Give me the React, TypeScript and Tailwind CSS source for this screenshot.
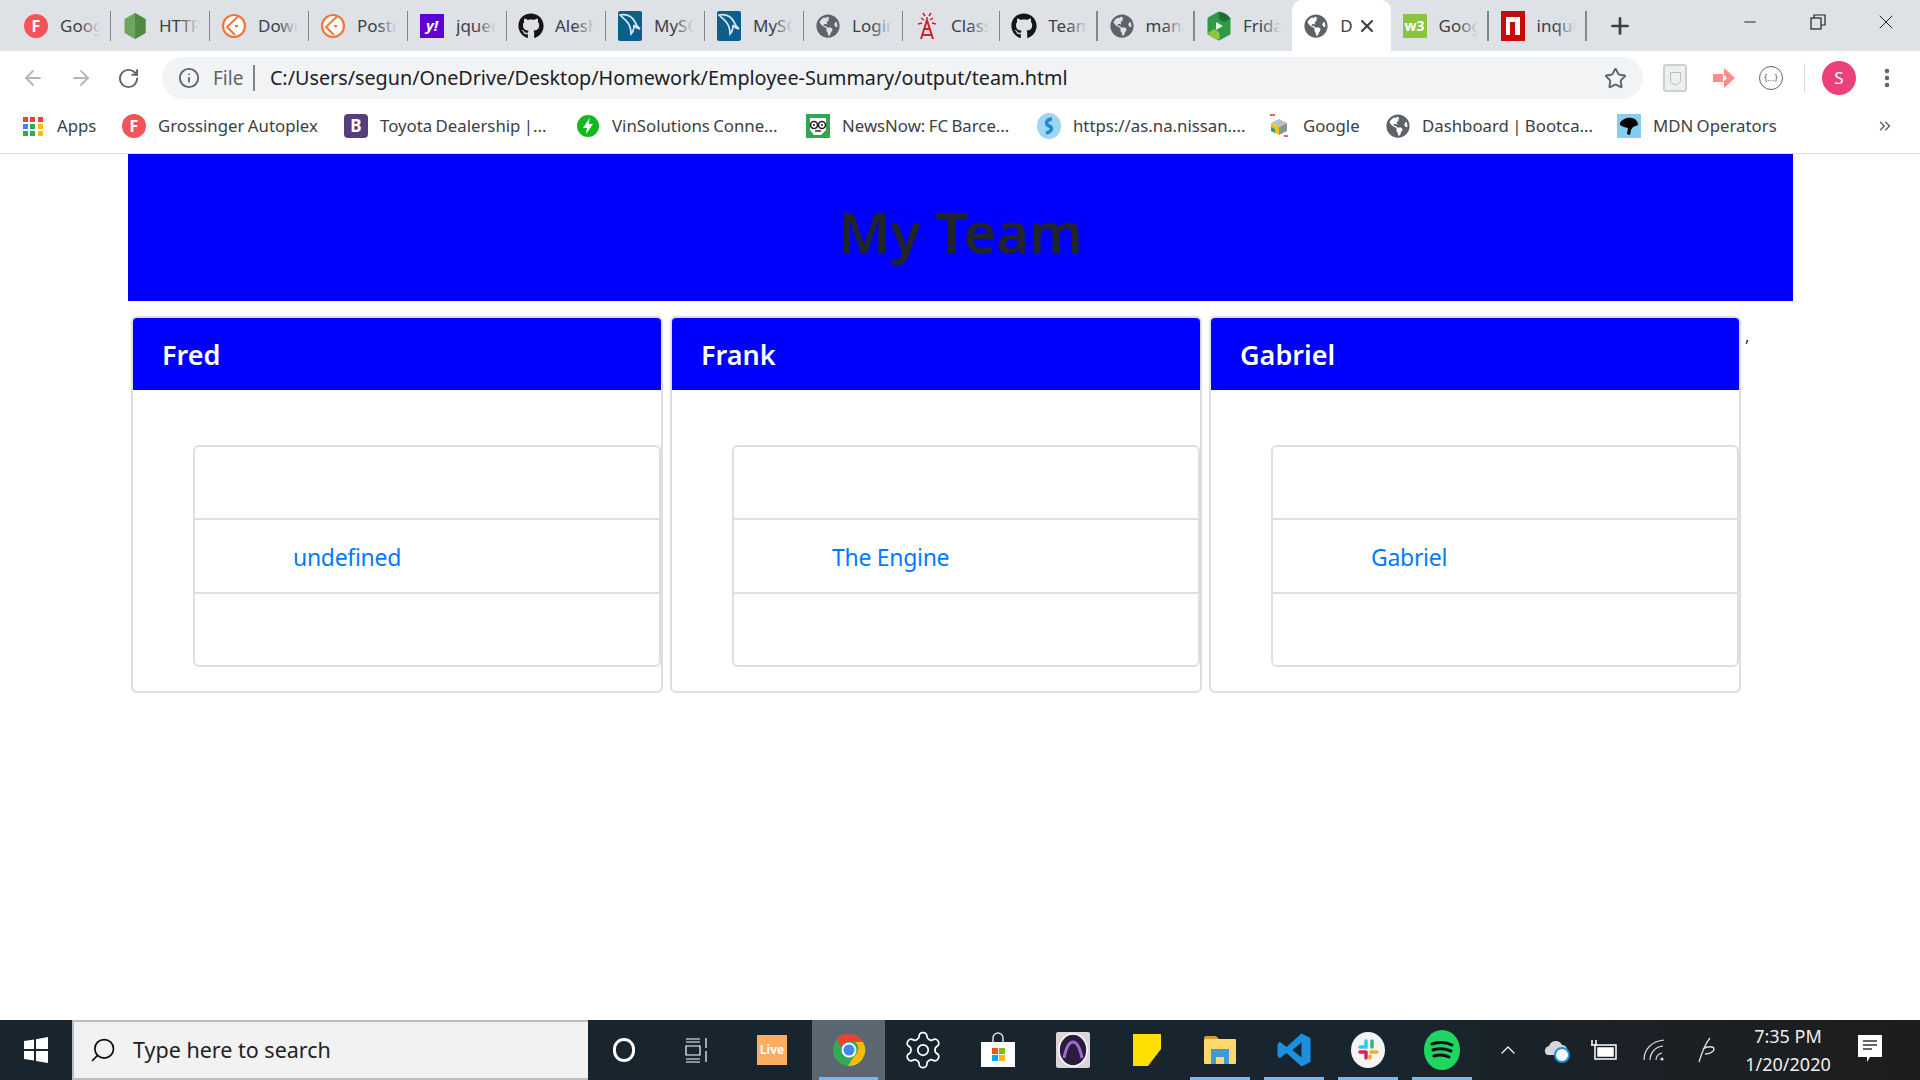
import * as React from "react";
import { FaGithub, FaGlobeAmericas } from "react-icons/fa";
import { ArrowLeft, ArrowRight, RotateCw, Info, Star, MoreVertical, Plus, X, Minus, Search, ChevronUp, ChevronsRight } from "lucide-react";

const IconF = () => (
  <div className="w-6 h-6 rounded-full bg-[#f4535a] flex items-center justify-center text-white text-[16px] font-bold">F</div>
);
const IconNode = () => (
  <svg width="24" height="28" viewBox="0 0 24 28">
    <path d="M12 1l10.5 6v14L12 27 1.500 21V7z" fill="#6da55f" />
    <path d="M12 1l10.500 6v14L12 27z" fill="#4e8b45" />
  </svg>
);
const IconPostman = () => (
  <svg width="26" height="26" viewBox="0 0 26 26">
    <circle cx="13" cy="13" r="11" fill="#fff" stroke="#f4743b" strokeWidth="2.200" />
    <path d="M17 3.500L6 14l8 8M14 13h3" fill="none" stroke="#f4743b" strokeWidth="2" />
  </svg>
);
const IconYahoo = () => (
  <div className="w-6 h-6 bg-[#5f01d1] flex items-center justify-center text-white text-[15px] font-bold italic">y!</div>
);
const IconMysql = () => (
  <svg width="24" height="30" viewBox="0 0 24 30">
    <rect width="24" height="30" rx="2" fill="#0d5e8a" />
    <path d="M2 4c6-1 12 1 15 7 1 3 3 5 5 7-3-1-5-2-6-4 0 4-1 7-3 9 0-4-1-8-3-11-2-3-5-5-8-8z" fill="none" stroke="#d8e8f0" strokeWidth="1.700" />
  </svg>
);
const IconGlobe = () => <FaGlobeAmericas size={24} className="text-[#5f6368]" />;
const IconGitHub = () => <FaGithub size={26} className="text-[#161514]" />;
const IconTower = () => (
  <svg width="24" height="28" viewBox="0 0 24 28" fill="none" stroke="#c8232c" strokeWidth="2">
    <path d="M12 8L6 27M12 8l6 19M9 17h6M7.500 23h9" />
    <path d="M12 5v3M6 6l3 2M18 6l-3 2M3 12l4-1M21 12l-4-1M8 1l2 3M16 1l-2 3" strokeWidth="1.500" />
  </svg>
);
const IconFriday = () => (
  <svg width="28" height="30" viewBox="0 0 28 30">
    <path d="M14 2l10 5.500v15L14 28 4 22.500v-15z" fill="#2e9a48" stroke="#2e9a48" strokeWidth="3" strokeLinejoin="round" />
    <path d="M14 1c5 0 10 3 11 7l-6 3-5-3z" fill="#1f6f35" />
    <path d="M3 22l6-4 5 3 1 7c-5 1-10-2-12-6z" fill="#8cc63f" />
    <path d="M11 11l7 4-7 4z" fill="#e4f2dc" />
  </svg>
);
const IconW3 = () => (
  <div className="w-6 h-6 bg-[#8ac43f] flex items-center justify-center text-white text-[14px] font-bold">w3</div>
);
const IconNpm = () => (
  <div className="w-6 h-[30px] bg-[#c90b0b] flex items-center justify-center">
    <div className="w-[14px] h-[18px] bg-white flex justify-center items-end">
      <div className="w-[5px] h-[13px] bg-[#c90b0b]" />
    </div>
  </div>
);
const IconApps = () => (
  <div className="grid grid-cols-3 gap-[2px] w-5">
    {["#ea4335", "#ea4335", "#ea4335", "#4285f4", "#34a853", "#fbbc05", "#34a853", "#34a853", "#fbbc05"].map((c, i) => (
      <div key={i} className="w-[5px] h-[5px]" style={{ backgroundColor: c }} />
    ))}
  </div>
);
const IconB = () => (
  <div className="w-6 h-6 rounded-[4px] bg-[#563d7c] flex items-center justify-center text-white text-[17px] font-bold">B</div>
);
const IconBolt = () => (
  <svg width="24" height="24" viewBox="0 0 24 24">
    <circle cx="12" cy="12" r="11" fill="#12b81f" />
    <path d="M13.500 4L7 14h4l-1 6 7-10h-4z" fill="#fff" />
  </svg>
);
const IconNews = () => (
  <svg width="24" height="24" viewBox="0 0 24 24">
    <rect width="24" height="24" fill="#2fa84f" />
    <path d="M4 4h16v12l-5 5H8l-4-5z" fill="#fff" />
    <circle cx="8" cy="11" r="3.500" fill="#fff" stroke="#222" strokeWidth="1.600" />
    <circle cx="16" cy="11" r="3.500" fill="#fff" stroke="#222" strokeWidth="1.600" />
    <circle cx="8" cy="11" r="1" fill="#222" />
    <circle cx="16" cy="11" r="1" fill="#222" />
    <path d="M9 17h6" stroke="#222" strokeWidth="1.400" />
  </svg>
);
const IconNissan = () => (
  <svg width="24" height="28" viewBox="0 0 24 28">
    <ellipse cx="12" cy="14" rx="12" ry="13" fill="#9ed5f0" />
    <path d="M15 7c-6 0-7 6-3 7s3 6-3 7" fill="none" stroke="#1d8ad0" strokeWidth="3.500" />
  </svg>
);
const IconCube = () => (
  <svg width="24" height="26" viewBox="0 0 24 26">
    <path d="M3 2h5M17 23h4" stroke="#d33" strokeWidth="1.500" />
    <path d="M12 6l8 4-8 4-8-4z" fill="#b9c2c2" />
    <path d="M4 10l8 4v8l-8-4z" fill="#f0c419" />
    <path d="M20 10l-8 4v8l8-4z" fill="#8a9596" />
    <path d="M4 14l4 2v4l-4-2z" fill="#2d9a8f" />
  </svg>
);
const IconMdn = () => (
  <div className="w-6 h-6 bg-[#83cdf0] flex items-center justify-center">
    <svg width="20" height="20" viewBox="0 0 20 20">
      <path d="M1 7c2-4 7-6 12-5 4 1 6 4 6 7l-5 2-2 3-1 5-3-1 1-6-4-1-4-2z" fill="#000" />
    </svg>
  </div>
);

const tabs = [
  { title: "Google", icon: <IconF />, width: "w-[99px]" },
  { title: "HTTP", icon: <IconNode />, width: "w-[99px]" },
  { title: "Download", icon: <IconPostman />, width: "w-[99px]" },
  { title: "Postman", icon: <IconPostman />, width: "w-[99px]" },
  { title: "jquery", icon: <IconYahoo />, width: "w-[99px]" },
  { title: "Alesha", icon: <IconGitHub />, width: "w-[99px]" },
  { title: "MySQL", icon: <IconMysql />, width: "w-[99px]" },
  { title: "MySQL", icon: <IconMysql />, width: "w-[99px]" },
  { title: "Login", icon: <IconGlobe />, width: "w-[99px]" },
  { title: "Classes", icon: <IconTower />, width: "w-[97.300px]" },
  { title: "Team", icon: <IconGitHub />, width: "w-[97.300px]" },
  { title: "manage", icon: <IconGlobe />, width: "w-[97.300px]" },
  { title: "Friday", icon: <IconFriday />, width: "w-[97.300px]" },
];

const bookmarks = [
  { label: "Apps", icon: <IconApps />, width: "w-[101px]" },
  { label: "Grossinger Autoplex", icon: <IconF />, width: "w-[222px]" },
  { label: "Toyota Dealership |...", icon: <IconB />, width: "w-[232px]" },
  { label: "VinSolutions Conne...", icon: <IconBolt />, width: "w-[230px]" },
  { label: "NewsNow: FC Barce...", icon: <IconNews />, width: "w-[231px]" },
  { label: "https://as.na.nissan....", icon: <IconNissan />, width: "w-[230px]" },
  { label: "Google", icon: <IconCube />, width: "w-[119px]" },
  { label: "Dashboard | Bootca...", icon: <IconGlobe />, width: "w-[231px]" },
  { label: "MDN Operators", icon: <IconMdn />, width: "w-[230px]" },
];

function Tab({ title, icon, width, last }: { title: string; icon: React.ReactNode; width: string; last?: boolean }) {
  return (
    <div className={`relative flex items-center h-full shrink-0 pr-[11px] ${width}`}>
      <div className="w-12 shrink-0 flex justify-center">{icon}</div>
      <div className="relative flex-1 overflow-hidden whitespace-nowrap text-[17px] text-[#3c4043]">
        {title}
        <div className="absolute inset-y-0 right-0 w-5 bg-gradient-to-r from-transparent to-[#dee1e6]" />
      </div>
      {!last && <div className="absolute right-0 top-[11px] h-[30px] w-[1.500px] bg-[#83868b]" />}
    </div>
  );
}

function TeamCard({ name, detail }: { name: string; detail: string }) {
  return (
    <div className="w-[532px] h-[377px] shrink-0 rounded-[6px] border-2 border-[#dfdfdf] overflow-hidden">
      <div className="h-[72px] pt-[2px] bg-[#0000ff] flex items-center pl-[29px] text-white text-[27px] font-semibold">{name}</div>
      <div className="pt-[55px] pl-[60px]">
        <div className="rounded-[6px] border-2 border-[#dfdfdf]">
          <div className="h-[71px]" />
          <div className="h-[76px] pt-[2px] border-y-2 border-[#dfdfdf] flex items-center pl-[98px] text-[23px] tracking-[-0.3px] text-[#007bff]">{detail}</div>
          <div className="h-[71px]" />
        </div>
      </div>
    </div>
  );
}

function TaskIcon({ children, width, active, underline }: { children: React.ReactNode; width: string; active?: boolean; underline?: boolean }) {
  return (
    <div className={`relative h-full flex items-center justify-center shrink-0 ${width} ${active ? "bg-[#5b6770]" : ""}`}>
      {children}
      {underline && <div className="absolute bottom-0 left-[7px] right-[7px] h-[3px] bg-[#76b9ed]" />}
    </div>
  );
}

export default function App() {
  return (
    <div className="w-[1920px] h-[1080px] flex flex-col overflow-hidden bg-white font-['Noto_Sans',sans-serif] text-[#212529]">
      {/* tab strip */}
      <div className="h-[51px] shrink-0 bg-[#dee1e6] flex items-center pl-[12px]">
        {tabs.map((t, i) => (
          <Tab key={i} title={t.title} icon={t.icon} width={t.width} last={i === tabs.length - 1} />
        ))}
        <div className="relative w-[98.400px] h-[51px] shrink-0 bg-white rounded-t-[10px] flex items-center">
          <div className="w-12 shrink-0 flex justify-center"><IconGlobe /></div>
          <div className="w-3 overflow-hidden text-[17px] text-[#3c4043]">D</div>
          <X size={20} strokeWidth={2.500} className="ml-[5px] text-[#3c4043]" />
        </div>
        <Tab title="Google" icon={<IconW3 />} width="w-[98px]" />
        <Tab title="inquirer" icon={<IconNpm />} width="w-[98px]" />
        <Plus size={26} strokeWidth={2.500} className="ml-[20px] text-[#3c4043]" />
        <div className="ml-auto flex items-center self-start h-[44px] text-[#222]">
          <div className="w-[68px] flex justify-center"><Minus size={18} strokeWidth={1.300} /></div>
          <div className="w-[68px] flex justify-center">
            <svg width="16" height="16" viewBox="0 0 16 16" fill="none" stroke="#222" strokeWidth="1.200">
              <rect x="1" y="4" width="10" height="11" />
              <path d="M4 4V1h11v10h-4" />
            </svg>
          </div>
          <div className="w-[68px] flex justify-center"><X size={24} strokeWidth={1} /></div>
        </div>
      </div>

      {/* address bar */}
      <div className="h-[52px] shrink-0 flex items-center pt-[2px]">
        <div className="w-[162px] shrink-0 flex items-center pl-[21px] gap-[24px]">
          <ArrowLeft size={24} strokeWidth={1.800} className="text-[#b4b6b8]" />
          <ArrowRight size={24} strokeWidth={1.800} className="text-[#b4b6b8]" />
          <RotateCw size={23} strokeWidth={2} className="text-[#5f6368]" />
        </div>
        <div className="w-[1481px] h-[42px] shrink-0 rounded-full bg-[#f1f3f4] flex items-center pl-4 pr-[16px]">
          <Info size={22} strokeWidth={2} className="text-[#5f6368]" />
          <span className="ml-[13px] text-[#5f6368] text-[19px]">File</span>
          <div className="ml-[10px] w-[1.500px] h-[26px] bg-[#80868b]" />
          <span className="ml-[15px] text-[#202124] text-[19.750px]">C:/Users/segun/OneDrive/Desktop/Homework/Employee-Summary/output/team.html</span>
          <Star size={23} strokeWidth={2} className="ml-auto text-[#5f6368]" />
        </div>
        <div className="flex-1 flex items-center pl-[20px]">
          <div className="w-6 h-7 rounded-[3px] border-2 border-[#ccd0d2] bg-[#eef0f0] flex items-center justify-center">
            <div className="w-[11px] h-[13px] rounded-b-[5px] border border-[#b9bdbf]" />
          </div>
          <svg width="26" height="26" viewBox="0 0 26 26" className="ml-[24px]">
            <path d="M13 3l11 10-11 10v-6H2V9h11z" fill="#ff8a8a" />
            <path d="M12 9l4 4-4 4z" fill="#fff" />
          </svg>
          <div className="ml-[22px] w-6 h-6 rounded-full border-[1.500px] border-[#5f6368] flex items-center justify-center text-[9px] text-[#5f6368]">{"{...}"}</div>
          <div className="ml-[21px] w-px h-[30px] bg-[#dadce0]" />
          <div className="ml-[17px] w-[34px] h-[34px] rounded-full bg-[#ec407a] flex items-center justify-center text-white text-[17px]">S</div>
          <MoreVertical size={24} strokeWidth={2.500} className="ml-[19px] text-[#5f6368]" />
        </div>
      </div>

      {/* bookmarks */}
      <div className="h-[51px] shrink-0 border-b border-[#dadce0] flex items-center pl-[21px] pb-[4px]">
        {bookmarks.map((b) => (
          <div key={b.label} className={`flex items-center shrink-0 ${b.width}`}>
            <div className="w-6 flex justify-center shrink-0">{b.icon}</div>
            <span className="ml-[12px] whitespace-nowrap text-[16.800px] [word-spacing:-1px] text-[#3c4043]">{b.label}</span>
          </div>
        ))}
        <ChevronsRight size={18} className="text-[#5f6368] ml-auto mr-[26px]" />
      </div>

      {/* page */}
      <div className="flex-1 pl-[128px]">
        <div className="w-[1665px] h-[147px] pt-[6px] bg-[#0000ff] flex items-center justify-center text-[56px] font-semibold text-[#212529]">My Team</div>
        <div className="mt-[15px] ml-[3px] flex items-start gap-[7px]">
          <TeamCard name="Fred" detail="undefined" />
          <TeamCard name="Frank" detail="The Engine" />
          <TeamCard name="Gabriel" detail="Gabriel" />
          <span className="text-[16px] leading-[40px] ml-[-3px]">,</span>
        </div>
      </div>

      {/* taskbar */}
      <div className="h-[60px] shrink-0 flex items-center bg-gradient-to-r from-[#18252f] from-70% to-[#1d1d1d] text-white">
        <div className="w-[72px] h-full flex items-center justify-center shrink-0">
          <svg width="24" height="26" viewBox="0 0 24 26" fill="#fff">
            <path d="M0 4l10-1.500V12H0zM12 2.200L24 0v12H12zM0 14h10v9.500L0 22zM12 14h12v12l-12-2z" />
          </svg>
        </div>
        <div className="w-[516px] h-full shrink-0 bg-[#f2f2f2] border-2 border-[#bdbdbd] border-r-0 flex items-center pl-[15px] text-[21.500px] text-[#222]">
          <Search size={28} strokeWidth={1.500} className="text-[#111] -scale-x-100" />
          <span className="ml-[16px]">Type here to search</span>
        </div>
        <TaskIcon width="w-[72px]"><div className="w-[22px] h-[24px] rounded-full border-[3px] border-white" /></TaskIcon>
        <TaskIcon width="w-[72px]">
          <svg width="26" height="26" viewBox="0 0 26 26" fill="none" stroke="#fff" strokeWidth="1.200">
            <path d="M3 2h14M3 5h14M3 9h14v9H3zM3 22h14M3 25h14M23 1v10M23 14v11" />
          </svg>
        </TaskIcon>
        <TaskIcon width="w-[80px]">
          <div className="w-[30px] h-[30px] bg-[#fdac62] flex items-center justify-center text-white text-[12px] font-bold">Live</div>
        </TaskIcon>
        <TaskIcon width="w-[73px]" active underline>
          <svg width="34" height="34" viewBox="0 0 34 34">
            <circle cx="17" cy="17" r="16" fill="#34a853" />
            <path d="M17 1a16 16 0 0 1 14 8H17a8 8 0 0 0-7.500 5L4 6a16 16 0 0 1 13-5z" fill="#ea4335" />
            <path d="M31 9a16 16 0 0 1-15 24l7-11a8 8 0 0 0 0-13z" fill="#fbbc05" />
            <circle cx="17" cy="17" r="7.500" fill="#fff" />
            <circle cx="17" cy="17" r="5.500" fill="#4285f4" />
          </svg>
        </TaskIcon>
        <TaskIcon width="w-[75px]">
          <svg width="42" height="42" viewBox="0 0 24 24" fill="none" stroke="#fff" strokeWidth="1">
            <path d="M12.220 2h-.44a2 2 0 0 0-2 2v.180a2 2 0 0 1-1 1.730l-.43.250a2 2 0 0 1-2 0l-.150-.080a2 2 0 0 0-2.730.730l-.220.380a2 2 0 0 0 .730 2.730l.150.100a2 2 0 0 1 1 1.720v.510a2 2 0 0 1-1 1.740l-.150.090a2 2 0 0 0-.730 2.730l.220.380a2 2 0 0 0 2.730.730l.150-.080a2 2 0 0 1 2 0l.430.250a2 2 0 0 1 1 1.730V20a2 2 0 0 0 2 2h.440a2 2 0 0 0 2-2v-.180a2 2 0 0 1 1-1.730l.430-.250a2 2 0 0 1 2 0l.150.080a2 2 0 0 0 2.730-.730l.220-.390a2 2 0 0 0-.730-2.730l-.150-.080a2 2 0 0 1-1-1.740v-.500a2 2 0 0 1 1-1.740l.150-.090a2 2 0 0 0 .730-2.730l-.220-.380a2 2 0 0 0-2.730-.730l-.150.080a2 2 0 0 1-2 0l-.430-.250a2 2 0 0 1-1-1.730V4a2 2 0 0 0-2-2z" />
            <circle cx="12" cy="12" r="3" />
          </svg>
        </TaskIcon>
        <TaskIcon width="w-[75px]">
          <svg width="36" height="36" viewBox="0 0 36 36">
            <path d="M13 10V6a5 5 0 0 1 10 0v4" fill="none" stroke="#ddd" strokeWidth="1.500" />
            <rect x="1" y="10" width="34" height="25" fill="#fff" />
            <rect x="12" y="16" width="6" height="6" fill="#f25022" />
            <rect x="19" y="16" width="6" height="6" fill="#7fba00" />
            <rect x="12" y="23" width="6" height="6" fill="#00a4ef" />
            <rect x="19" y="23" width="6" height="6" fill="#ffb900" />
          </svg>
        </TaskIcon>
        <TaskIcon width="w-[75px]">
          <svg width="34" height="36" viewBox="0 0 34 36">
            <rect width="34" height="36" rx="2" fill="#d9d5d8" />
            <ellipse cx="17" cy="18" rx="14" ry="16" fill="#2a1c3a" stroke="#fff" strokeWidth="1.500" />
            <path d="M8 26c2-10 5-16 9-16s7 6 9 16" fill="none" stroke="#9a6bd0" strokeWidth="3" />
          </svg>
        </TaskIcon>
        <TaskIcon width="w-[73px]">
          <svg width="28" height="32" viewBox="0 0 28 32">
            <rect width="28" height="32" fill="#ffe000" />
            <path d="M28 15v17H15z" fill="#18252f" />
            <path d="M28 17v15H17z" fill="#222" />
          </svg>
        </TaskIcon>
        <TaskIcon width="w-[74px]" underline>
          <svg width="32" height="30" viewBox="0 0 32 30">
            <path d="M0 3a2 2 0 0 1 2-2h10l3 3H0z" fill="#d89f30" />
            <rect y="4" width="32" height="25" rx="1" fill="#ffd76a" />
            <rect x="7" y="14" width="18" height="15" fill="#3f9ad8" />
            <rect x="12" y="22" width="8" height="7" fill="#ffd76a" />
          </svg>
        </TaskIcon>
        <TaskIcon width="w-[74px]" underline>
          <svg width="36" height="40" viewBox="0 0 24 24">
            <path d="M17 1l6 3v16l-6 3-10-9-4.500 3.500L1 16V8l1.500-1.500L7 10zM17 7l-6 5 6 5z" fill="#1c8fe0" />
          </svg>
        </TaskIcon>
        <TaskIcon width="w-[74px]" underline>
          <svg width="36" height="38" viewBox="0 0 36 38">
            <ellipse cx="18" cy="19" rx="17" ry="18" fill="#f4f4f4" />
            <path d="M16 10v6h-6" stroke="#36c5f0" strokeWidth="3.500" fill="none" strokeLinecap="round" />
            <path d="M22 10v6" stroke="#2eb67d" strokeWidth="3.500" strokeLinecap="round" />
            <path d="M21 21h6" stroke="#ecb22e" strokeWidth="3.500" strokeLinecap="round" />
            <path d="M20 27v-2" stroke="#ecb22e" strokeWidth="3.500" strokeLinecap="round" />
            <path d="M10 21h6M16 21v6" stroke="#e01e5a" strokeWidth="3.500" strokeLinecap="round" />
          </svg>
        </TaskIcon>
        <TaskIcon width="w-[74px]" underline>
          <svg width="36" height="40" viewBox="0 0 36 40">
            <ellipse cx="18" cy="20" rx="18" ry="20" fill="#1ed760" />
            <path d="M8 14c7-2 14-2 20 1M9 20c6-2 12-1.500 18 1M10 26c5-1.500 11-1 15 1" stroke="#111" strokeWidth="3" fill="none" strokeLinecap="round" />
          </svg>
        </TaskIcon>
        <div className="ml-[17px] w-6 flex justify-center shrink-0"><ChevronUp size={26} strokeWidth={1.200} /></div>
        <div className="ml-[24px] w-6 shrink-0">
          <svg width="26" height="26" viewBox="0 0 26 26">
            <path d="M3 18a5 5 0 0 1 2-9 7 7 0 0 1 13-1 6 6 0 0 1 4 10z" fill="#d6d6d6" />
            <circle cx="18" cy="18" r="7" fill="#fff" stroke="#1c8fe0" strokeWidth="2" />
          </svg>
        </div>
        <div className="ml-[23px] w-6 shrink-0">
          <svg width="26" height="22" viewBox="0 0 26 22" fill="none" stroke="#fff" strokeWidth="1.500">
            <rect x="4" y="6" width="21" height="14" />
            <rect x="7" y="9" width="15" height="8" fill="#fff" />
            <path d="M1 1v5M5 1v5M0 6h6" />
          </svg>
        </div>
        <div className="ml-[27px] w-6 shrink-0">
          <svg width="24" height="24" viewBox="0 0 24 24" fill="none" stroke="#ddd" strokeWidth="1.200">
            <path d="M2 22C2 11 10 3 22 2M8 22c0-7 5-13 13-14M14 22c0-3 2-6 6-7" />
            <circle cx="20" cy="21" r="1" fill="#fff" />
          </svg>
        </div>
        <div className="ml-[28px] w-6 shrink-0">
          <svg width="24" height="28" viewBox="0 0 24 28" fill="none" stroke="#ddd" strokeWidth="1.300">
            <path d="M16 2c-5 6-8 14-11 24M9 13c4-3 11-3 11 0s-5 5-9 5" />
          </svg>
        </div>
        <div className="w-[130px] ml-[5px] shrink-0 flex flex-col items-center text-[18px] leading-[28px] text-[#f0f0f0]">
          <span>7:35 PM</span>
          <span>1/20/2020</span>
        </div>
        <div className="w-6 ml-[4px] shrink-0">
          <svg width="26" height="30" viewBox="0 0 26 30">
            <path d="M1 0h24v22H13l-3 5v-5H1z" fill="#fff" />
            <path d="M6 6h14M6 10h14M6 14h9" stroke="#333" strokeWidth="1.400" />
          </svg>
        </div>
      </div>
    </div>
  );
}
